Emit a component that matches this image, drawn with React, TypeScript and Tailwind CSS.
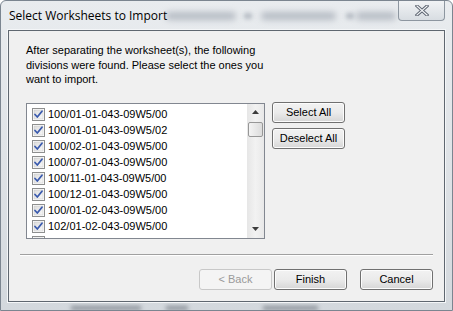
import React from "react";

const items = [
  "100/01-01-043-09W5/00",
  "100/01-01-043-09W5/02",
  "100/02-01-043-09W5/00",
  "100/07-01-043-09W5/00",
  "100/11-01-043-09W5/00",
  "100/12-01-043-09W5/00",
  "100/01-02-043-09W5/00",
  "102/01-02-043-09W5/00",
  "100/04-02-043-09W5/00",
];

function Check() {
  return (
    <svg width="13" height="13" viewBox="0 0 13 13" className="shrink-0">
      <defs>
        <linearGradient id="cbg" x1="0" y1="0" x2="1" y2="1">
          <stop offset="0" stopColor="#dcdcdc" />
          <stop offset="1" stopColor="#f8f8f8" />
        </linearGradient>
      </defs>
      <rect x="0.5" y="0.5" width="12" height="12" fill="#fff" stroke="#8e8f8f" />
      <rect x="2" y="2" width="9" height="9" fill="url(#cbg)" stroke="#c4c4c4" strokeWidth="0.5" />
      <path d="M3 6.5 L5.3 9 L10 3.2" fill="none" stroke="#3b5bae" strokeWidth="1.8" strokeLinecap="round" strokeLinejoin="round" />
    </svg>
  );
}

function Btn({ children, w, disabled }: { children: React.ReactNode; w: string; disabled?: boolean }) {
  return (
    <div
      className={`${w} h-[21px] rounded-[3px] border flex items-center justify-center text-[11px] leading-none ${
        disabled
          ? "border-[#c8c8c8] bg-[#f4f4f4] text-[#9a9a9a]"
          : "border-[#707070] bg-gradient-to-b from-[#f2f2f2] via-[#ebebeb] to-[#d6d6d6] text-black shadow-[inset_0_0_0_1px_#fcfcfc]"
      }`}
    >
      {children}
    </div>
  );
}

export default function App() {
  return (
    <div
      className="w-[453px] h-[311px] relative overflow-hidden bg-gradient-to-b from-[#e9ecef] via-[#dfe3e7] to-[#d3d8dd] rounded-t-[6px] border border-[#7b8590]"
      style={{ fontFamily: '"Liberation Sans", Arial, sans-serif' }}
    >
      {/* blurred background content through glass */}
      <div className="absolute left-[165px] top-[11px] w-[70px] h-[8px] bg-[#b6bcc4] blur-[3px] rounded" />
      <div className="absolute left-[243px] top-[12px] w-[8px] h-[6px] bg-[#b6bcc4] blur-[2px]" />
      <div className="absolute left-[260px] top-[11px] w-[75px] h-[8px] bg-[#b6bcc4] blur-[3px] rounded" />
      <div className="absolute left-[345px] top-[12px] w-[8px] h-[6px] bg-[#b6bcc4] blur-[2px]" />
      <div className="absolute left-[355px] top-[11px] w-[40px] h-[8px] bg-[#b6bcc4] blur-[3px] rounded" />
      <div className="absolute left-[70px] bottom-[0px] w-[70px] h-[4px] bg-[#8a9098] blur-[2px]" />
      <div className="absolute left-[165px] bottom-[0px] w-[22px] h-[4px] bg-[#8a9098] blur-[2px]" />
      <div className="absolute left-[262px] bottom-[0px] w-[55px] h-[4px] bg-[#8a9098] blur-[2px]" />

      <div className="relative h-[29px] flex items-center pl-[8px] text-[12px] text-black" style={{ fontFamily: '"Open Sans", sans-serif' }}>
        Select Worksheets to Import
      </div>
      <div className="absolute right-[7px] top-[-1px] w-[47px] h-[21px] rounded-b-[4px] border border-[#8d96a0] border-t-0 bg-gradient-to-b from-[#f2f4f6] to-[#d8dde2] flex items-center justify-center">
        <svg width="14" height="11" viewBox="0 0 14 11">
          <path d="M2 1 L12 10 M12 1 L2 10" stroke="#5c6470" strokeWidth="3.2" strokeLinecap="square" />
          <path d="M2 1 L12 10 M12 1 L2 10" stroke="#f4f6f8" strokeWidth="1.2" strokeLinecap="square" />
        </svg>
      </div>

      <div className="relative mx-[7px] h-[272px] border border-[#5f6770] bg-[#f0f0f0] shadow-[0_0_0_1px_#f4f6f8] flex flex-col text-[11px] text-black">
        <div className="pl-[17px] pt-[12px] leading-[14.5px] whitespace-nowrap">
          After separating the worksheet(s), the following
          <br />
          divisions were found. Please select the ones you
          <br />
          want to import.
        </div>
        <div className="flex mt-[16px] pl-[17px]">
          <div className="w-[239px] h-[136px] border border-[#828790] bg-white flex overflow-hidden">
            <div className="flex-1 flex flex-col pl-[5px] pt-[3px] overflow-hidden">
              {items.map((t) => (
                <div key={t} className="h-[16px] flex items-center gap-[3px] shrink-0 leading-none">
                  <Check />
                  <span>{t}</span>
                </div>
              ))}
            </div>
            <div className="w-[17px] h-full bg-gradient-to-r from-[#e6e6e6] via-[#f2f2f2] to-[#e8e8e8] flex flex-col items-center relative">
              <div className="h-[17px] flex items-center justify-center">
                <svg width="7" height="4" viewBox="0 0 7 4"><path d="M0 4 L3.5 0 L7 4 Z" fill="#3c3c3c" /></svg>
              </div>
              <div className="mt-[1px] w-[15px] h-[15px] rounded-[2px] border border-[#979797] bg-gradient-to-r from-[#f4f4f4] to-[#dcdcdc]" />
              <div className="flex-1" />
              <div className="h-[17px] flex items-center justify-center">
                <svg width="7" height="4" viewBox="0 0 7 4"><path d="M0 0 L3.5 4 L7 0 Z" fill="#3c3c3c" /></svg>
              </div>
            </div>
          </div>
          <div className="flex flex-col gap-[5px] ml-[7px] mt-[-1px]">
            <Btn w="w-[73px]">Select All</Btn>
            <Btn w="w-[73px]">Deselect All</Btn>
          </div>
        </div>
        <div className="mx-[11px] mt-[15px] h-[2px] border-t border-[#a0a0a0] border-b border-b-white" />
        <div className="flex justify-end pr-[11px] mt-[13px]">
          <Btn w="w-[73px]" disabled>&lt; Back</Btn>
          <div className="ml-[2px]">
            <Btn w="w-[73px]">Finish</Btn>
          </div>
          <div className="ml-[13px]">
            <Btn w="w-[73px]">Cancel</Btn>
          </div>
        </div>
      </div>
    </div>
  );
}
